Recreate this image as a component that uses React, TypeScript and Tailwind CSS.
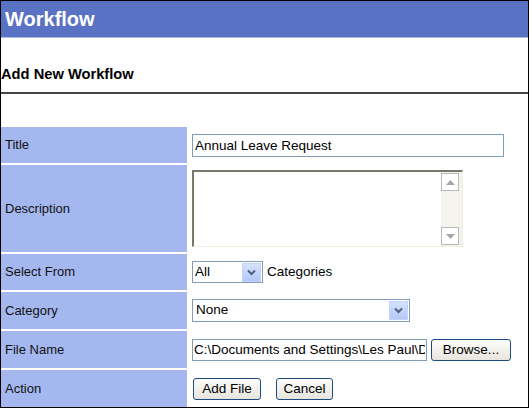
import React from 'react';

const rows = 'flex';
const labelCls =
  'w-[186px] shrink-0 bg-[#a4b8ef] pl-[4px] flex items-center text-[13px] text-[#111]';

function Chevron() {
  return (
    <div className="w-[19px] h-[19px] bg-gradient-to-b from-[#d6e2fd] to-[#b4c8f6] border border-[#c3d3fd] flex items-center justify-center">
      <svg width="9" height="7" viewBox="0 0 9 7">
        <polyline points="1,1.5 4.5,5 8,1.5" fill="none" stroke="#4d6185" strokeWidth="2" />
      </svg>
    </div>
  );
}

function ScrollBtn({ up }: { up?: boolean }) {
  return (
    <div className="w-[18px] h-[18px] bg-white border border-[#b8b8b8] flex items-center justify-center">
      <svg width="9" height="5" viewBox="0 0 9 5">
        <polygon points={up ? '0,5 4.5,0 9,5' : '0,0 4.5,5 9,0'} fill="#a6a6a6" />
      </svg>
    </div>
  );
}

function XpButton({ children, w }: { children: React.ReactNode; w: string }) {
  return (
    <button
      className={`${w} h-[22px] rounded-[3px] border border-[#1c4b82] bg-gradient-to-b from-[#fdfdfb] to-[#e6e4dc] text-[13.5px] text-black leading-none`}
    >
      {children}
    </button>
  );
}

export default function App() {
  return (
    <div className="w-[529px] h-[408px] border border-black bg-white font-['Liberation_Sans',Arial,sans-serif] flex flex-col overflow-hidden">
      {/* Header */}
      <div className="h-[36px] shrink-0 bg-[#5a72c4] text-white font-bold text-[20px] pl-[4px] flex items-center">
        Workflow
      </div>
      <div className="h-px shrink-0 bg-[#a9b7e6]" />
      <div className="h-[54px] shrink-0 flex flex-col justify-end pb-[9px]">
        <div className="text-[14.7px] font-bold leading-[17px] text-black">Add New Workflow</div>
      </div>
      <div className="h-[2px] shrink-0 bg-[#454545]" />
      <div className="h-[33px] shrink-0" />

      {/* Form table */}
      <div className="flex flex-col gap-[2px]">
        <div className={`${rows} h-[36px]`}>
          <div className={labelCls}>Title</div>
          <div className="pl-[5px] flex items-center">
            <input
              readOnly
              value="Annual Leave Request"
              className="w-[312px] h-[23px] border border-[#7f9db9] px-[2px] text-[13.5px] text-black outline-none"
            />
          </div>
        </div>

        <div className={`${rows} h-[87px]`}>
          <div className={labelCls}>Description</div>
          <div className="pl-[5px] flex items-center">
            <div className="w-[271px] h-[77px] border-t-2 border-l-2 border-[#7a776b] border-r border-b border-r-[#f1efe2] border-b-[#f1efe2] flex justify-end">
              <div className="w-[21px] h-full bg-[#f4f3ee] flex flex-col justify-between py-[1px]">
                <ScrollBtn up />
                <ScrollBtn />
              </div>
            </div>
          </div>
        </div>

        <div className={`${rows} h-[36px]`}>
          <div className={labelCls}>Select From</div>
          <div className="pl-[5px] flex items-center gap-[4px] text-[13.5px]">
            <div className="w-[71px] h-[22px] border border-[#7f9db9] flex items-center justify-between pl-[2px] pr-px">
              <span>All</span>
              <Chevron />
            </div>
            <span>Categories</span>
          </div>
        </div>

        <div className={`${rows} h-[37px]`}>
          <div className={labelCls}>Category</div>
          <div className="pl-[5px] flex items-center text-[13.5px]">
            <div className="w-[218px] h-[23px] border border-[#7f9db9] flex items-center justify-between pl-[3px] pr-px">
              <span>None</span>
              <Chevron />
            </div>
          </div>
        </div>

        <div className={`${rows} h-[37px]`}>
          <div className={labelCls}>File Name</div>
          <div className="pl-[5px] flex items-center gap-[4px]">
            <input
              readOnly
              value="C:\Documents and Settings\Les Paul\Desktop\Annual Leave.doc"
              className="w-[235px] h-[22px] border border-[#7f9db9] px-[1px] text-[13.5px] text-black outline-none"
            />
            <XpButton w="w-[80px]">Browse...</XpButton>
          </div>
        </div>

        <div className={`${rows} h-[37px]`}>
          <div className={labelCls}>Action</div>
          <div className="pl-[6px] flex items-center gap-[15px]">
            <XpButton w="w-[68px]">Add File</XpButton>
            <XpButton w="w-[57px]">Cancel</XpButton>
          </div>
        </div>
      </div>
    </div>
  );
}
